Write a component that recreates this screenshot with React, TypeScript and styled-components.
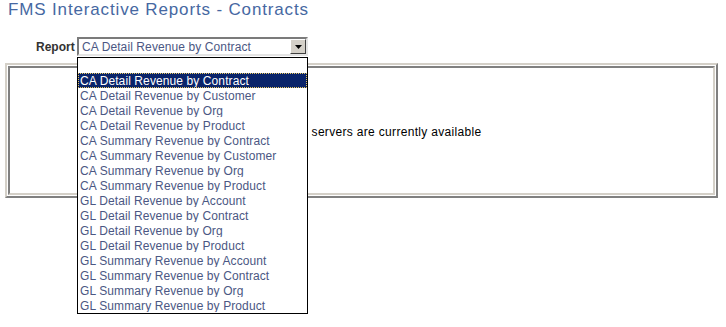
import React from 'react'
import styled, { createGlobalStyle } from 'styled-components'

const GlobalStyle = createGlobalStyle`
  html, body {
    margin: 0;
    padding: 0;
    background: #ffffff;
  }
  body {
    font-family: "Liberation Sans", Arial, sans-serif;
  }
`

const reports = [
  'CA Detail Revenue by Contract',
  'CA Detail Revenue by Customer',
  'CA Detail Revenue by Org',
  'CA Detail Revenue by Product',
  'CA Summary Revenue by Contract',
  'CA Summary Revenue by Customer',
  'CA Summary Revenue by Org',
  'CA Summary Revenue by Product',
  'GL Detail Revenue by Account',
  'GL Detail Revenue by Contract',
  'GL Detail Revenue by Org',
  'GL Detail Revenue by Product',
  'GL Summary Revenue by Account',
  'GL Summary Revenue by Contract',
  'GL Summary Revenue by Org',
  'GL Summary Revenue by Product',
]

const Page = styled.div`
  width: 726px;
  height: 327px;
  display: flex;
  flex-direction: column;
`
const Title = styled.h1`
  margin: 0;
  padding: 0 8px;
  font-size: 17px;
  line-height: 20px;
  letter-spacing: 0.85px;
  font-weight: normal;
  color: #4668a2;
`
const FormRow = styled.div`
  margin-top: 17px;
  padding-left: 36px;
  display: flex;
  align-items: center;
  height: 19px;
  position: relative;
  z-index: 2;
`
const Label = styled.label`
  width: 41px;
  font-size: 12px;
  font-weight: bold;
  color: #333333;
`
const SelectWrap = styled.div`
  position: relative;
  width: 231px;
  height: 19px;
`
const SelectBox = styled.div`
  box-sizing: border-box;
  width: 100%;
  height: 100%;
  border: 2px solid;
  border-color: #7b7b7b #e4e4e4 #e4e4e4 #7b7b7b;
  background: #fff;
  display: flex;
  align-items: center;
  padding-left: 3px;
  font-size: 12px;
  letter-spacing: 0.1px;
  color: #4b5783;
`
const Arrow = styled.div`
  position: absolute;
  right: 2px;
  top: 2px;
  box-sizing: border-box;
  width: 16px;
  height: 15px;
  background: #d4d0c8;
  border: 1px solid;
  border-color: #ffffff #404040 #404040 #ffffff;
  display: flex;
  align-items: center;
  justify-content: center;
`
const DropList = styled.ul`
  position: absolute;
  top: 20px;
  left: 0;
  box-sizing: border-box;
  width: 231px;
  margin: 0;
  padding: 0;
  list-style: none;
  border: 1px solid #000000;
  background: #ffffff;
`
const Option = styled.li<{ $selected?: boolean }>`
  box-sizing: border-box;
  height: 15px;
  line-height: 14px;
  padding-left: 1px;
  font-size: 12px;
  letter-spacing: 0.1px;
  white-space: nowrap;
  overflow: hidden;
  color: ${p => (p.$selected ? '#ffffff' : '#4b5783')};
  background: ${p => (p.$selected ? '#0a246a' : 'transparent')};
  border: 1px ${p => (p.$selected ? 'dotted #e8c860' : 'solid transparent')};
`
const Panel = styled.div`
  margin: 7px 0 0 5px;
  box-sizing: border-box;
  width: 713px;
  height: 135px;
  padding: 1px;
  border: 2px solid;
  border-color: #d4d0c8 #808080 #808080 #d4d0c8;
`
const PanelInner = styled.div`
  box-sizing: border-box;
  height: 100%;
  border: 2px solid;
  border-color: #808080 #d4d0c8 #d4d0c8 #808080;
  display: flex;
  align-items: center;
  padding-left: 245px;
  padding-top: 3px;
`
const Message = styled.p`
  margin: 0;
  font-size: 12px;
  letter-spacing: 0.32px;
  color: #000000;
`

const App = () => {
  return (
    <Page>
      <GlobalStyle />
      <Title>FMS Interactive Reports - Contracts</Title>
      <FormRow>
        <Label>Report</Label>
        <SelectWrap>
          <SelectBox>{reports[0]}</SelectBox>
          <Arrow>
            <svg width="7" height="4" viewBox="0 0 7 4">
              <path d="M0 0H7L3.5 4Z" fill="#000" />
            </svg>
          </Arrow>
          <DropList>
            <Option>&nbsp;</Option>
            {reports.map((r, i) => (
              <Option key={r} $selected={i === 0}>
                {r}
              </Option>
            ))}
          </DropList>
        </SelectWrap>
      </FormRow>
      <Panel>
        <PanelInner>
          <Message>No report servers are currently available</Message>
        </PanelInner>
      </Panel>
    </Page>
  )
}

export default App
